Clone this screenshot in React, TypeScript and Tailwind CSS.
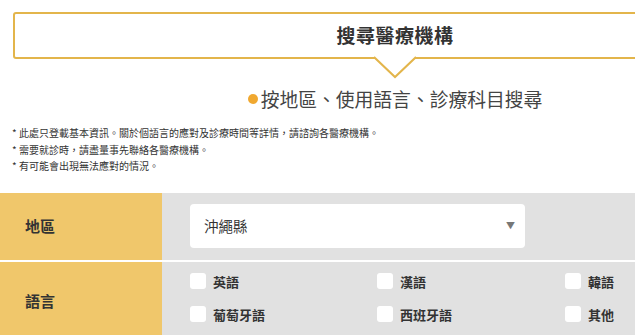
const langs = ["英語", "漢語", "韓語", "葡萄牙語", "西班牙語", "其他"];

function Checkbox({ label }: { label: string }) {
  return (
    <label className="flex items-center gap-[7px] text-[13px] font-bold text-[#333]">
      <span className="w-[16px] h-[16px] rounded-[3px] bg-white shrink-0" />
      {label}
    </label>
  );
}

export default function App() {
  return (
    <div
      className="w-[790px] bg-white text-[#333] pb-10"
      style={{ fontFamily: '"Noto Sans CJK TC", "Noto Sans", sans-serif' }}
    >
      {/* heading box */}
      <div className="pt-[12px] px-[13px]">
        <div className="relative h-[47px] border-2 border-[#e3b54b] rounded-[3px] flex items-center justify-center">
          <h1 className="text-[19px] font-bold text-[#333] tracking-[0.5px]">搜尋醫療機構</h1>
          <svg
            className="absolute left-1/2 -translate-x-1/2 bottom-[-22px]"
            width="42"
            height="23"
            viewBox="0 0 42 23"
          >
            <path d="M0 1 L21 21 L42 1" fill="white" stroke="#e3b54b" strokeWidth="2" />
          </svg>
        </div>
      </div>

      <div className="mt-[26px] flex items-center justify-center gap-[3px] text-[18.8px] text-[#444]">
        <span className="w-[10px] h-[10px] rounded-full bg-[#f0a830]" />
        按地區、使用語言、診療科目搜尋
      </div>

      <div className="mt-[12px] px-[12px] text-[10px] leading-[16.5px] text-[#333]">
        <p>* 此處只登載基本資訊。關於個語言的應對及診療時間等詳情，請諮詢各醫療機構。</p>
        <p>* 需要就診時，請盡量事先聯絡各醫療機構。</p>
        <p>* 有可能會出現無法應對的情況。</p>
      </div>

      <div className="mt-[18px] flex flex-col gap-[2px]">
        <div className="flex h-[67px]">
          <div className="w-[162px] bg-[#f0c76b] flex items-center pl-[25px] text-[15px] font-bold text-[#333]">
            地區
          </div>
          <div className="flex-1 bg-[#e1e1e1] flex items-center pl-[28px]">
            <div className="w-[335px] h-[44px] bg-white rounded-[4px] flex items-center justify-between pl-[14px] pr-[10px] text-[14.5px] text-[#333]">
              沖繩縣
              <span className="text-[9px] text-[#777]">▼</span>
            </div>
          </div>
        </div>
        <div className="flex h-[80px]">
          <div className="w-[162px] bg-[#f0c76b] flex items-center pl-[25px] text-[15px] font-bold text-[#333]">
            語言
          </div>
          <div className="flex-1 bg-[#e1e1e1] pl-[28px] pt-[10px] grid grid-cols-[187px_188px_1fr] auto-rows-[33px] items-start">
            {langs.map((l) => (
              <Checkbox key={l} label={l} />
            ))}
          </div>
        </div>
      </div>
    </div>
  );
}
